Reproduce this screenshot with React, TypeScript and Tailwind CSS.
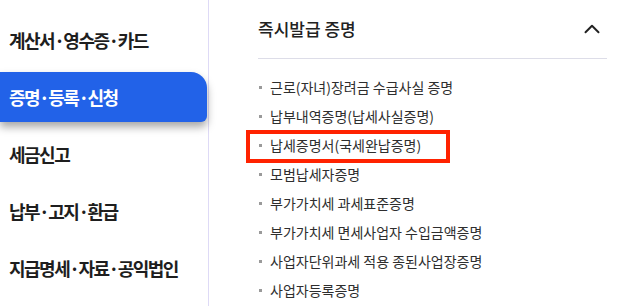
import { ChevronUp } from "lucide-react";

const navItems = [
  "계산서·영수증·카드",
  "증명·등록·신청",
  "세금신고",
  "납부·고지·환급",
  "지급명세·자료·공익법인",
];

const certItems = [
  "근로(자녀)장려금 수급사실 증명",
  "납부내역증명(납세사실증명)",
  "납세증명서(국세완납증명)",
  "모범납세자증명",
  "부가가치세 과세표준증명",
  "부가가치세 면세사업자 수입금액증명",
  "사업자단위과세 적용 종된사업장증명",
  "사업자등록증명",
];

const App = () => {
  const activeNav = 1;
  const highlighted = 2;

  return (
    <div
      className="flex h-[306px] w-[625px] overflow-hidden bg-white"
      style={{ fontFamily: '"Noto Sans CJK KR", "Noto Sans", sans-serif' }}
    >
      {/* Left menu */}
      <nav className="flex w-[209px] shrink-0 flex-col gap-[7px] border-r border-[#dedaf6] pr-[1px] pt-[15px]">
        {navItems.map((item, idx) => (
          <div
            key={item}
            className={`flex h-[50px] items-center pl-[9px] text-[18px] font-bold tracking-[-1.5px] ${
              idx === activeNav
                ? "rounded-tr-[16px] rounded-br-[6px] bg-[#2262e8] text-white shadow-[0_5px_8px_rgba(0,0,0,0.35)]"
                : "text-[#1e1e1e]"
            }`}
          >
            {item}
          </div>
        ))}
      </nav>

      {/* Right panel */}
      <div className="flex-1 pl-[49px] pr-[18px]">
        <div className="flex h-[59px] items-center justify-between border-b border-[#dddde8] pr-[2px]">
          <h2 className="text-[17px] font-medium text-[#222]">즉시발급 증명</h2>
          <ChevronUp size={26} strokeWidth={1.8} className="text-[#222]" />
        </div>

        <ul className="pt-[14px]">
          {certItems.map((item, idx) => (
            <li
              key={item}
              className="relative flex h-[29px] items-center text-[14px] text-[#2e2e2e]"
            >
              <span className="ml-[1px] mr-[8px] h-[3px] w-[3px] bg-[#9a9a9a]" />
              {item}
              {idx === highlighted && (
                <span className="pointer-events-none absolute left-[-12px] top-[-1px] h-[33px] w-[204px] border-[4px] border-[#ff2200]" />
              )}
            </li>
          ))}
        </ul>
      </div>
    </div>
  );
};

export default App;
